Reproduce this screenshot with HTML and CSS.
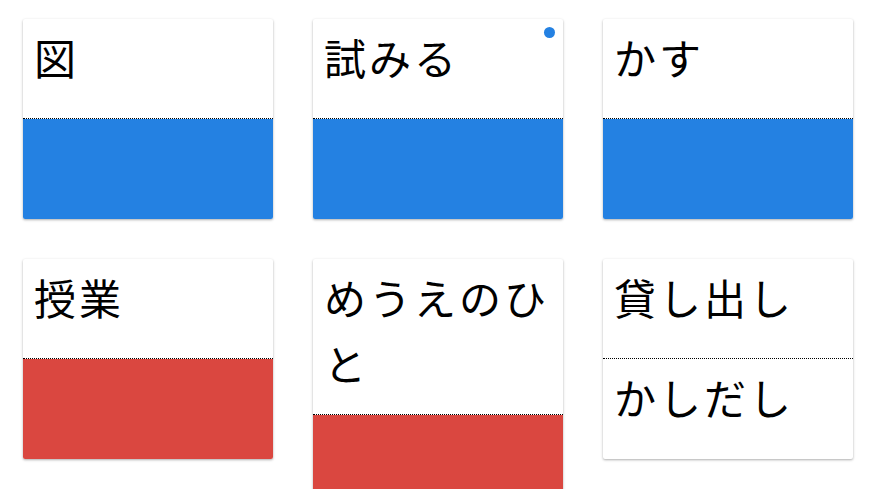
FILE: index.html
```html
<!DOCTYPE html>
<html lang="ja">
<head>
<meta charset="utf-8">
<link rel="stylesheet" href="styles.css">
</head>
<body>
<div class="grid">
  <div class="card">
    <div class="front">図</div>
    <div class="back blue"></div>
  </div>
  <div class="card">
    <span class="dot"></span>
    <div class="front">試みる</div>
    <div class="back blue"></div>
  </div>
  <div class="card">
    <div class="front">かす</div>
    <div class="back blue"></div>
  </div>
  <div class="card">
    <div class="front">授業</div>
    <div class="back red"></div>
  </div>
  <div class="card">
    <div class="front">めうえのひと</div>
    <div class="back red"></div>
  </div>
  <div class="card">
    <div class="front">貸し出し</div>
    <div class="back">かしだし</div>
  </div>
</div>
</body>
</html>
```
FILE: styles.css
```css
html, body {
  margin: 0;
  padding: 0;
  background: #fff;
}
body {
  font-family: "Noto Sans CJK JP", "Noto Sans", sans-serif;
  color: #000;
}
.grid {
  display: grid;
  grid-template-columns: repeat(3, 250px);
  column-gap: 40px;
  row-gap: 40px;
  padding: 19px 0 0 23px;
  align-items: start;
}
.card {
  position: relative;
  background: #fff;
  border-radius: 2px;
  box-shadow: 0 1px 3px rgba(0,0,0,0.22), 0 1px 2px rgba(0,0,0,0.12);
  overflow: hidden;
}
.front, .back {
  font-size: 42px;
  letter-spacing: 3px;
  line-height: 66px;
  padding: 5px 8px 18px 11px;
  min-height: 100px;
  box-sizing: border-box;
}
.front {
  border-bottom: 1px dotted #000;
}
.blue { background: #2481e2; }
.red { background: #da4740; }
.dot {
  position: absolute;
  top: 8px;
  right: 8px;
  width: 11px;
  height: 11px;
  border-radius: 50%;
  background: #2481e2;
}
```
